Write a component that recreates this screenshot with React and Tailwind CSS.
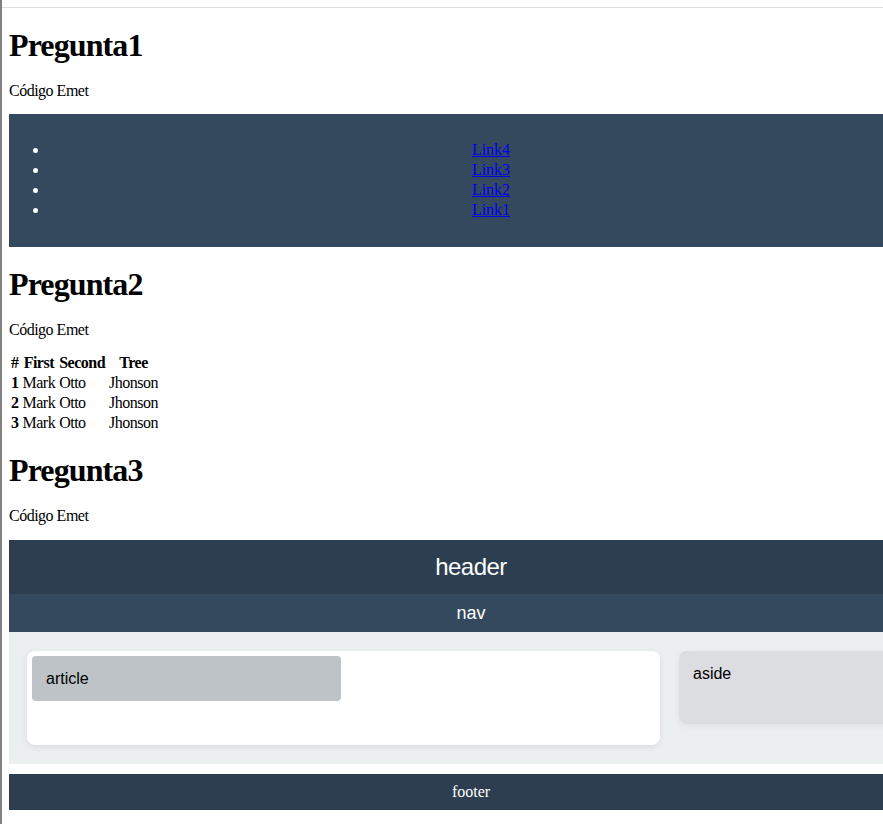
const rows = [
	{ n: "1", first: "Mark", second: "Otto", tree: "Jhonson" },
	{ n: "2", first: "Mark", second: "Otto", tree: "Jhonson" },
	{ n: "3", first: "Mark", second: "Otto", tree: "Jhonson" },
];

const links = ["Link4", "Link3", "Link2", "Link1"];

export default function App() {
	return (
		<div className="w-[883px] h-[824px] overflow-hidden bg-white border-l-2 border-[#808080] font-['Liberation_Serif',serif] text-black">
			<div className="pt-[7px]">
				<div className="h-px bg-[#dedede]" />
			</div>
			<div className="ml-[7px] w-[924px]">
				{/* Pregunta 1 */}
				<h1 className="mt-[19px] text-[32px] font-bold leading-[37px] tracking-[-0.9px]">Pregunta1</h1>
				<p className="mt-[18px] text-[16px] leading-[18px] tracking-[-0.5px]">Código Emet</p>
				<nav className="mt-[14px] h-[133px] bg-[#34495e] pt-[26px]">
					<ul className="list-disc pl-[40px] text-[16px] leading-[20px] marker:text-white">
						{links.map((l) => (
							<li key={l} className="text-center">
								<a href="#" className="text-[#0000ee] underline">{l}</a>
							</li>
						))}
					</ul>
				</nav>

				{/* Pregunta 2 */}
				<h1 className="mt-[19px] text-[32px] font-bold leading-[37px] tracking-[-0.9px]">Pregunta2</h1>
				<p className="mt-[18px] text-[16px] leading-[18px] tracking-[-0.5px]">Código Emet</p>
				<table className="mt-[13px] -ml-[1px] border-separate border-spacing-[2px] text-[16px] leading-[18px] tracking-[-0.5px]">
					<thead>
						<tr>
							<th className="py-0 px-[1px] font-bold text-center">#</th>
							<th className="py-0 px-[1px] font-bold text-center">First</th>
							<th className="py-0 px-[1px] font-bold text-center">Second</th>
							<th className="py-0 px-[1px] font-bold text-center">Tree</th>
						</tr>
					</thead>
					<tbody>
						{rows.map((r) => (
							<tr key={r.n}>
								<th className="py-0 px-[1px] font-bold text-left">{r.n}</th>
								<td className="py-0 px-[1px]">{r.first}</td>
								<td className="py-0 px-[1px]">{r.second}</td>
								<td className="py-0 px-[1px]">{r.tree}</td>
							</tr>
						))}
					</tbody>
				</table>

				{/* Pregunta 3 */}
				<h1 className="mt-[18px] text-[32px] font-bold leading-[37px] tracking-[-0.9px]">Pregunta3</h1>
				<p className="mt-[18px] text-[16px] leading-[18px] tracking-[-0.5px]">Código Emet</p>
				<div className="mt-[15px] font-['Liberation_Sans',Arial,sans-serif]">
					<header className="h-[54px] bg-[#2d3e50] flex items-center justify-center text-white text-[24px] tracking-[-0.5px]">
						header
					</header>
					<div className="h-[38px] bg-[#34495e] flex items-center justify-center text-white text-[18px]">
						nav
					</div>
					<main className="bg-[#ebeff0] py-[19px] px-[18px] flex items-start gap-[19px]">
						<article className="w-[633px] h-[94px] shrink-0 bg-white rounded-[8px] p-[5px] shadow-[0_2px_6px_rgba(0,0,0,0.08)]">
							<div className="w-[309px] h-[45px] bg-[#bdc3c7] rounded-[4px] px-[14px] flex items-center text-[16px] text-black">
								article
							</div>
						</article>
						<aside className="flex-1 h-[73px] bg-[#dcdde0] rounded-[8px] px-[14px] pt-[11px] text-[16px] text-black shadow-[0_2px_6px_rgba(0,0,0,0.06)]">
							aside
						</aside>
					</main>
				</div>
				<footer className="mt-[10px] h-[36px] bg-[#2d3e50] flex items-center justify-center text-white text-[16px]">
					footer
				</footer>
			</div>
		</div>
	);
}
